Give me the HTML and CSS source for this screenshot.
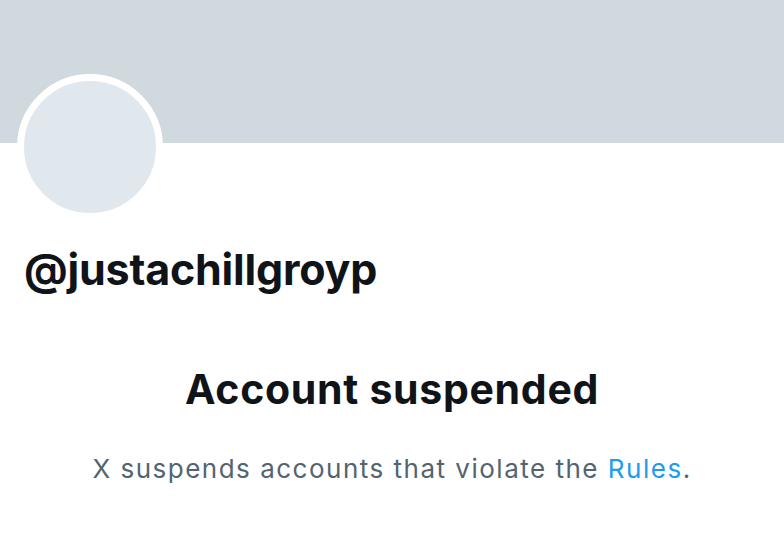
FILE: index.html
```html
<!DOCTYPE html>
<html>
<head>
<meta charset="utf-8">
<link rel="stylesheet" href="styles.css">
</head>
<body>
<div class="page">
  <div class="banner"></div>
  <div class="profile">
    <div class="avatar"></div>
    <div class="handle">@justachillgroyp</div>
  </div>
  <div class="notice">
    <h1 class="title">Account suspended</h1>
    <p class="desc">X suspends accounts that violate the <span class="link">Rules</span>.</p>
  </div>
</div>
</body>
</html>
```
FILE: styles.css
```css
* { box-sizing: border-box; }
html, body { margin: 0; padding: 0; background: #fff; }
.page { width: 784px; height: 535px; overflow: hidden; font-family: "Inter", "Liberation Sans", sans-serif; }
.banner { height: 143px; background: #cfd9de; }
.profile { padding: 0 0 0 17px; }
.avatar {
  width: 146px; height: 146px; border-radius: 50%;
  background: #e1e8ed; border: 7px solid #fff;
  margin-top: -69px;
}
.handle {
  margin-top: 24px; margin-left: 7px;
  font-size: 43px; font-weight: 700; color: #0f1419; line-height: 50px;
  letter-spacing: -0.2px;
}
.notice { text-align: center; margin-top: 71px; }
.title { margin: 0; font-size: 41px; font-weight: 700; color: #0f1419; line-height: 48px; letter-spacing: 0.7px; }
.desc { margin: 40px 0 0; font-size: 26px; color: #536471; line-height: 32px; letter-spacing: 1.5px; }
.link { color: #1d9bf0; }
```
